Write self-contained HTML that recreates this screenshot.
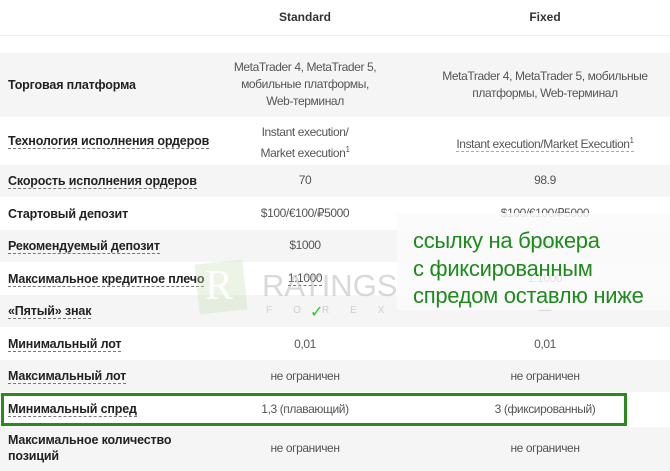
<!DOCTYPE html>
<html><head><meta charset="utf-8"><style>
*{margin:0;padding:0;box-sizing:border-box}
body{width:670px;height:471px;overflow:hidden;background:#fff;font-family:"Liberation Sans","DejaVu Sans",sans-serif;position:relative;color:#222}
.r{position:absolute;left:0;width:670px}
.g{background:#f5f5f5}
.l{position:absolute;left:8px;font-weight:bold;font-size:12.5px;color:#222;line-height:16px;letter-spacing:-0.15px}
.u{border-bottom:1px dashed #777}
.v{position:absolute;text-align:center;font-size:12px;color:#555;line-height:17px;letter-spacing:-0.4px}
.s{left:205px;width:200px}
.f{left:420px;width:250px}
sup{font-size:8px}
</style></head><body>
<div class="v s" style="top:9px;font-weight:bold;color:#333;letter-spacing:0">Standard</div>
<div class="v f" style="top:9px;font-weight:bold;color:#333;left:460px;width:170px;letter-spacing:0">Fixed</div>
<div class="r" style="top:35px;height:1px;background:#eee"></div>

<div class="r g" style="top:53px;height:64px"></div>
<div class="l" style="top:77px">Торговая платформа</div>
<div class="v s" style="top:59px">MetaTrader 4, MetaTrader 5,<br>мобильные платформы,<br>Web-терминал</div>
<div class="v f" style="top:68px">MetaTrader 4, MetaTrader 5, мобильные<br>платформы, Web-терминал</div>

<div class="l" style="top:133px"><span class="u">Технология исполнения ордеров</span></div>
<div class="v s" style="top:124px">Instant execution/<br>Market execution<sup>1</sup></div>
<div class="v f" style="top:132px"><span class="u" style="border-color:#aaa">Instant execution/Market Execution<sup>1</sup></span></div>

<div class="r g" style="top:165px;height:32px"></div>
<div class="l" style="top:173px"><span class="u">Скорость исполнения ордеров</span></div>
<div class="v s" style="top:172px">70</div>
<div class="v f" style="top:172px">98.9</div>

<div class="l" style="top:206px">Стартовый депозит</div>
<div class="v s" style="top:205px">$100/€100/₽5000</div>
<div class="v f" style="top:205px">$100/€100/₽5000</div>

<div class="r g" style="top:230px;height:32px"></div>
<div class="l" style="top:238px"><span class="u">Рекомендуемый депозит</span></div>
<div class="v s" style="top:237px">$1000</div>
<div class="v f" style="top:237px">$1000</div>

<div class="l" style="top:271px"><span class="u">Максимальное кредитное плечо</span></div>
<div class="v s" style="top:270px"><span class="u">1:1000</span></div>
<div class="v f" style="top:270px">1:1000</div>

<div class="r g" style="top:295px;height:32px"></div>
<div class="l" style="top:303px"><span class="u">«Пятый» знак</span></div>
<div class="v f" style="top:301px;color:#bbb">—</div>

<div class="l" style="top:336px"><span class="u">Минимальный лот</span></div>
<div class="v s" style="top:336px">0,01</div>
<div class="v f" style="top:336px">0,01</div>

<div class="r g" style="top:360px;height:32px"></div>
<div class="l" style="top:368px"><span class="u">Максимальный лот</span></div>
<div class="v s" style="top:368px">не ограничен</div>
<div class="v f" style="top:368px">не ограничен</div>

<div class="l" style="top:401px"><span class="u">Минимальный спред</span></div>
<div class="v s" style="top:401px">1,3 (плавающий)</div>
<div class="v f" style="top:401px">3 (фиксированный)</div>
<div style="position:absolute;left:1px;top:393px;width:626px;height:33px;border:3px solid #2a8a1a"></div>

<div class="r g" style="top:427px;height:44px"></div>
<div class="l" style="top:432px">Максимальное количество<br>позиций</div>
<div class="v s" style="top:440px">не ограничен</div>
<div class="v f" style="top:440px">не ограничен</div>

<!-- watermark -->
<div style="position:absolute;left:197px;top:262px;width:48px;height:50px;background:rgba(200,225,180,0.35);transform:rotate(-6deg)"></div>
<div style="position:absolute;left:205px;top:262px;font-family:'Liberation Serif',serif;font-size:42px;color:rgba(255,255,255,0.9)">R</div>
<div style="position:absolute;left:262px;top:270px;font-size:31px;line-height:32px;color:rgba(170,170,170,0.45)">RATINGS</div>
<div style="position:absolute;left:266px;top:305px;font-size:10px;color:rgba(170,170,170,0.5);letter-spacing:21px">FOREX</div>
<div style="position:absolute;left:310px;top:302px;color:#2c2;font-size:16px">✓</div>

<div style="position:absolute;left:397px;top:213px;width:273px;height:97px;background:rgba(250,250,250,0.85)"></div>
<div style="position:absolute;left:413px;top:227px;font-family:'Liberation Sans',sans-serif;font-size:22px;line-height:27.5px;color:#1e8a1e;letter-spacing:-0.3px">ссылку на брокера<br>с фиксированным<br>спредом оставлю ниже</div>
</body></html>
